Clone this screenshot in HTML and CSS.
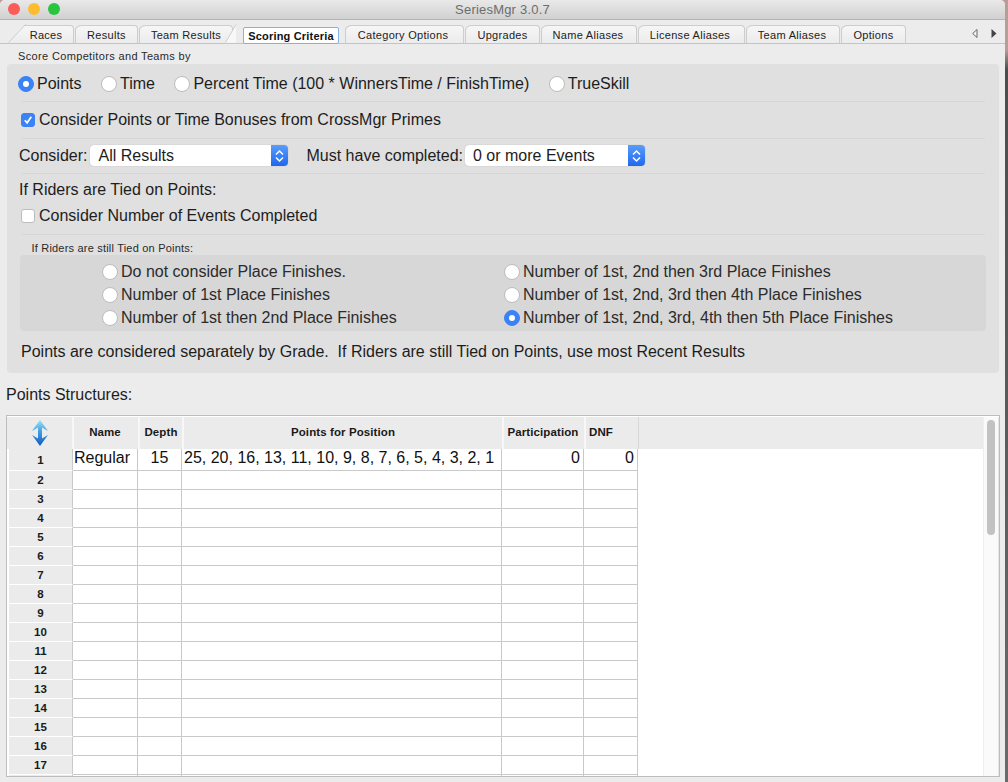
FILE: index.html
```html
<!DOCTYPE html>
<html lang="en">
<head>
    <meta charset="UTF-8">
    <meta name="viewport" content="width=device-width, initial-scale=1.0">
    <title>SeriesMgr 3.0.7</title>
    <link rel="stylesheet" href="styles.css">
</head>
<body>
    <div class="window">
        <header class="titlebar">
            <div class="lights">
                <span class="light red"></span>
                <span class="light yellow"></span>
                <span class="light green"></span>
            </div>
            <span class="title">SeriesMgr 3.0.7</span>
        </header>

        <nav class="tabs">
            <a class="tab first">Races</a>
            <a class="tab t-results">Results</a>
            <a class="tab t-team">Team Results</a>
            <a class="tab selected">Scoring Criteria</a>
            <a class="tab t-cat">Category Options</a>
            <a class="tab t-up">Upgrades</a>
            <a class="tab t-name">Name Aliases</a>
            <a class="tab t-lic">License Aliases</a>
            <a class="tab t-tal">Team Aliases</a>
            <a class="tab t-opt">Options</a>
            <!-- slanted edges of the first and the selected tab -->
            <svg class="slant slant-first" width="19" height="19" viewBox="0 0 19 19"><path d="M0 0H17.500L.5 18.500z" fill="#ececec"/><path d="M.5 18.500 17.500 .5" fill="none" stroke="#cdcdcd"/></svg>
            <svg class="slant slant-selected" width="12" height="19" viewBox="0 0 12 19"><path d="M.5 18.500 11 .5V19z" fill="#f8f8f8"/><path d="M.5 18.500 11 .5" fill="none" stroke="#cdcdcd"/></svg>
            <div class="tab-arrows">
                <svg width="6" height="9" viewBox="0 0 6 9"><path d="M5 .5v8L.7 4.500z" fill="#f4f4f4" stroke="#666" stroke-width="1"/></svg>
                <svg width="6" height="9" viewBox="0 0 6 9"><path d="M.5 0v9L5.500 4.500z" fill="#444"/></svg>
            </div>
        </nav>

        <main class="content">
            <div class="group-label">Score Competitors and Teams by</div>
            <section class="group">
                <div class="row row-score">
                    <label class="opt"><span class="radio on"></span>Points</label>
                    <label class="opt"><span class="radio"></span>Time</label>
                    <label class="opt"><span class="radio"></span>Percent Time (100 * WinnersTime / FinishTime)</label>
                    <label class="opt"><span class="radio"></span>TrueSkill</label>
                </div>
                <hr class="sep">
                <label class="opt row-check">
                    <span class="check on">
                        <svg width="10" height="10" viewBox="0 0 10 10"><path d="M1.800 5.200 4.100 7.800 8.300 1.800" fill="none" stroke="#fff" stroke-width="1.700"/></svg>
                    </span>Consider Points or Time Bonuses from CrossMgr Primes
                </label>
                <hr class="sep">
                <div class="row row-select">
                    <span>Consider:</span>
                    <div class="select sel-consider">All Results<span class="sel-btn">
                        <svg width="9" height="14" viewBox="0 0 9 14"><path d="M1 5.500 4.500 2 8 5.500M1 8.500 4.500 12 8 8.500" fill="none" stroke="#fff" stroke-width="1.500"/></svg>
                    </span></div>
                    <span class="must">Must have completed:</span>
                    <div class="select sel-events">0 or more Events<span class="sel-btn">
                        <svg width="9" height="14" viewBox="0 0 9 14"><path d="M1 5.500 4.500 2 8 5.500M1 8.500 4.500 12 8 8.500" fill="none" stroke="#fff" stroke-width="1.500"/></svg>
                    </span></div>
                </div>
                <hr class="sep">
                <div class="tied-title">If Riders are Tied on Points:</div>
                <label class="opt row-check2"><span class="check"></span>Consider Number of Events Completed</label>
                <hr class="sep">
                <div class="sub-label">If Riders are still Tied on Points:</div>
                <div class="subgroup">
                    <label class="opt"><span class="radio"></span>Do not consider Place Finishes.</label>
                    <label class="opt"><span class="radio"></span>Number of 1st, 2nd then 3rd Place Finishes</label>
                    <label class="opt"><span class="radio"></span>Number of 1st Place Finishes</label>
                    <label class="opt"><span class="radio"></span>Number of 1st, 2nd, 3rd then 4th Place Finishes</label>
                    <label class="opt"><span class="radio"></span>Number of 1st then 2nd Place Finishes</label>
                    <label class="opt"><span class="radio on"></span>Number of 1st, 2nd, 3rd, 4th then 5th Place Finishes</label>
                </div>
                <p class="note">Points are considered separately by Grade.&nbsp; If Riders are still Tied on Points, use most Recent Results</p>
            </section>

            <div class="structures-label">Points Structures:</div>
            <div class="grid-frame">
                <div class="grid-scroll">
                    <table class="grid">
                        <colgroup>
                            <col class="c-row"><col class="c-name"><col class="c-depth"><col class="c-points"><col class="c-part"><col class="c-dnf"><col>
                        </colgroup>
                        <thead>
                            <tr>
                                <th class="corner">
                                    <svg width="16" height="26" viewBox="0 0 16 26">
                                        <defs>
                                            <linearGradient id="arrowFill" x1="0" y1="0" x2="0" y2="1">
                                                <stop offset="0" stop-color="#9be0f5"/>
                                                <stop offset="0.45" stop-color="#3f9fe2"/>
                                                <stop offset="1" stop-color="#1458c4"/>
                                            </linearGradient>
                                        </defs>
                                        <path d="M8 0 16 11 10 7.500V18.500L16 15 8 26 0 15 6 18.500V7.500L0 11z" fill="url(#arrowFill)"/>
                                    </svg>
                                </th>
                                <th class="th-name">Name</th><th>Depth</th><th>Points for Position</th><th class="th-part">Participation</th><th class="th-dnf">DNF</th><th class="th-rest"></th>
                            </tr>
                        </thead>
                        <tbody>
                            <tr class="first-row"><th>1</th><td>Regular</td><td class="mid">15</td><td class="pts">25, 20, 16, 13, 11, 10, 9, 8, 7, 6, 5, 4, 3, 2, 1</td><td class="num">0</td><td class="num">0</td><td class="rest"></td></tr>
                            <tr><th>2</th><td></td><td></td><td></td><td></td><td></td><td class="rest"></td></tr>
                            <tr><th>3</th><td></td><td></td><td></td><td></td><td></td><td class="rest"></td></tr>
                            <tr><th>4</th><td></td><td></td><td></td><td></td><td></td><td class="rest"></td></tr>
                            <tr><th>5</th><td></td><td></td><td></td><td></td><td></td><td class="rest"></td></tr>
                            <tr><th>6</th><td></td><td></td><td></td><td></td><td></td><td class="rest"></td></tr>
                            <tr><th>7</th><td></td><td></td><td></td><td></td><td></td><td class="rest"></td></tr>
                            <tr><th>8</th><td></td><td></td><td></td><td></td><td></td><td class="rest"></td></tr>
                            <tr><th>9</th><td></td><td></td><td></td><td></td><td></td><td class="rest"></td></tr>
                            <tr><th>10</th><td></td><td></td><td></td><td></td><td></td><td class="rest"></td></tr>
                            <tr><th>11</th><td></td><td></td><td></td><td></td><td></td><td class="rest"></td></tr>
                            <tr><th>12</th><td></td><td></td><td></td><td></td><td></td><td class="rest"></td></tr>
                            <tr><th>13</th><td></td><td></td><td></td><td></td><td></td><td class="rest"></td></tr>
                            <tr><th>14</th><td></td><td></td><td></td><td></td><td></td><td class="rest"></td></tr>
                            <tr><th>15</th><td></td><td></td><td></td><td></td><td></td><td class="rest"></td></tr>
                            <tr><th>16</th><td></td><td></td><td></td><td></td><td></td><td class="rest"></td></tr>
                            <tr><th>17</th><td></td><td></td><td></td><td></td><td></td><td class="rest"></td></tr>
                            <tr><th></th><td></td><td></td><td></td><td></td><td></td><td class="rest"></td></tr>
                        </tbody>
                    </table>
                </div>
                <div class="scrollbar"><div class="thumb"></div></div>
            </div>
        </main>
    </div>
</body>
</html>
```

FILE: styles.css
```css
/* General */
html, body {
    margin: 0;
    padding: 0;
    height: 782px;
    overflow: hidden;
}

body {
    font-family: "Liberation Sans", Arial, sans-serif;
    font-size: 16px;
    color: #1d1d1d;
    background: linear-gradient(#b89c98 0, #b89c98 50px, #4c4c4c 70px, #6a6a6a 100%);
}

.window {
    width: 1005px;
    height: 782px;
    background-color: #ececec;
    display: flex;
    flex-direction: column;
    border-radius: 5px 5px 0 0;
    overflow: hidden;
}

/* Title bar */
.titlebar {
    height: 19px;
    flex: none;
    display: flex;
    align-items: center;
    justify-content: center;
    background: linear-gradient(#e9e9e9, #d0d0d0);
    border-bottom: 1px solid #b4b4b4;
    position: relative;
}

.title {
    font-size: 13px;
    color: #6d6d6d;
    letter-spacing: 0.2px;
}

.lights {
    position: absolute;
    left: 8px;
    top: 3px;
    display: flex;
    gap: 8px;
}

.light {
    width: 12px;
    height: 12px;
    border-radius: 50%;
}

.red { background-color: #fc5b57; }
.yellow { background-color: #fdbc2e; }
.green { background-color: #27c63f; }

/* Tabs */
.tabs {
    height: 23px;
    flex: none;
    display: flex;
    align-items: flex-end;
    padding-left: 8px;
    border-bottom: 1px solid #c4c4c4;
    position: relative;
    background-color: #ececec;
}

.tab {
    box-sizing: border-box;
    height: 18px;
    font-size: 11px;
    letter-spacing: 0.3px;
    line-height: 19px;
    text-align: center;
    color: #222;
    background: linear-gradient(#f6f6f6, #ececec);
    border: 1px solid #cdcdcd;
    border-bottom: none;
    border-radius: 7px 4px 0 0 / 5px 4px 0 0;
    margin-right: 1px;
}

.first { width: 66px; padding-left: 11px; border-left: none; }
.t-results { width: 63px; }
.t-team { width: 94px; margin-right: 10px; }
.t-cat { width: 119px; margin-left: 6px; padding-right: 3px; }
.t-up { width: 75px; }
.t-name { width: 96px; padding-right: 2px; }
.t-lic { width: 107px; padding-right: 3px; }
.t-tal { width: 94px; padding-right: 2px; }
.t-opt { width: 65px; }

.selected {
    width: 96px;
    height: 17px;
    line-height: 16px;
    font-weight: bold;
    letter-spacing: 0.2px;
    color: #111;
    background-color: #fff;
    background-image: none;
    border: 1px solid #7fb2e6;
    border-radius: 2px;
    margin-bottom: -1px;
    margin-right: 0;
    position: relative;
    z-index: 1;
}

.slant {
    position: absolute;
    top: 4px;
}

.slant-first { left: 8px; }
.slant-selected { left: 225px; }

.tab-arrows {
    position: absolute;
    left: 972px;
    top: 9px;
    display: flex;
    gap: 13px;
}

/* Content */
.content {
    flex: 1;
    padding: 0 0 0 6px;
    min-height: 0;
    display: flex;
    flex-direction: column;
}

.group-label {
    font-size: 11px;
    letter-spacing: 0.35px;
    padding: 5px 0 1px 12px;
    height: 14px;
    line-height: 14px;
    color: #2a2a2a;
}

.group {
    box-sizing: border-box;
    width: 992px;
    height: 309px;
    margin-left: 1px;
    background-color: #e0e0e0;
    border-radius: 4px;
    flex: none;
}

.opt {
    display: flex;
    align-items: center;
    white-space: nowrap;
}

.radio {
    box-sizing: border-box;
    width: 16px;
    height: 16px;
    border-radius: 50%;
    background-color: #fff;
    border: 1px solid #bcbcbc;
    margin-right: 3px;
    flex: none;
}

.radio.on {
    background-color: #3b82f6;
    border-color: #3b82f6;
    position: relative;
}

.radio.on::after {
    content: "";
    position: absolute;
    left: 4px;
    top: 4px;
    width: 6px;
    height: 6px;
    border-radius: 50%;
    background-color: #fff;
}

.check {
    box-sizing: border-box;
    width: 14px;
    height: 14px;
    border-radius: 3px;
    background-color: #fff;
    border: 1px solid #bcbcbc;
    margin-right: 4px;
    flex: none;
    display: flex;
    align-items: center;
    justify-content: center;
}

.check.on {
    background-color: #3b82f6;
    border-color: #3b82f6;
}

.sep {
    border: none;
    height: 1px;
    background-color: #d6d6d6;
    margin: 0 14px 0 15px;
}

.row {
    display: flex;
    align-items: center;
}

.row-score {
    box-sizing: border-box;
    height: 37px;
    padding: 2px 0 0 11px;
    gap: 19.500px;
}

.row-check {
    height: 36px;
    padding-left: 14px;
}

.row-select {
    box-sizing: border-box;
    height: 34px;
    padding: 0 0 1px 12px;
}

.select {
    box-sizing: border-box;
    height: 21px;
    line-height: 21px;
    background-color: #fff;
    border-radius: 4px;
    box-shadow: 0 0 1px 0 #999;
    padding-left: 8px;
    position: relative;
    margin-left: 3px;
}

.sel-consider { width: 198px; }
.sel-events { width: 180px; margin-left: 2px; }

.sel-btn {
    position: absolute;
    right: 0;
    top: 0;
    width: 17px;
    height: 21px;
    border-radius: 0 4px 4px 0;
    background: linear-gradient(#5a9cfb, #1f68ee);
    display: flex;
    align-items: center;
    justify-content: center;
}

.must { margin-left: 18px; }

.tied-title {
    height: 31px;
    line-height: 32px;
    padding-left: 12px;
}

.row-check2 {
    box-sizing: border-box;
    height: 29px;
    padding: 0 0 7px 14px;
}

.sub-label {
    font-size: 11px;
    letter-spacing: 0.2px;
    height: 20px;
    line-height: 26px;
    padding-left: 24.500px;
    color: #2a2a2a;
}

.subgroup {
    box-sizing: border-box;
    height: 76px;
    margin: 0 13px;
    background-color: #d7d7d7;
    border-radius: 4px;
    padding: 5px 0 0 82px;
    display: grid;
    grid-template-columns: 402px 1fr;
    grid-auto-rows: 23px;
    color: #2b2b2b;
}

.note {
    margin: 0;
    padding-left: 14px;
    height: 42px;
    line-height: 42px;
}

.structures-label {
    height: 42px;
    line-height: 44px;
    flex: none;
}

/* Points grid */
.grid-frame {
    box-sizing: border-box;
    width: 994px;
    height: 362px;
    flex: none;
    display: flex;
    background-color: #fff;
    border: 1px solid #bdbdbd;
    padding-top: 1px;
}

.grid-scroll {
    flex: 1;
    overflow: hidden;
    min-width: 0;
}

.grid {
    border-collapse: separate;
    border-spacing: 0;
    table-layout: fixed;
    width: 976px;
}

.c-row { width: 66px; }
.c-name { width: 65px; }
.c-depth { width: 44px; }
.c-points { width: 320px; }
.c-part { width: 82px; }
.c-dnf { width: 54px; }

.grid thead th {
    height: 32px;
    padding: 0 0 2px;
    box-sizing: border-box;
    background-color: #ebebeb;
    font-size: 11.500px;
    letter-spacing: 0.1px;
    font-weight: bold;
    color: #1a1a1a;
    text-align: center;
    border-left: 2px solid #f7f7f7;
    vertical-align: middle;
}

.grid thead .corner {
    border-left: none;
    border-right: 1px solid #f7f7f7;
    padding: 0;
}

.grid thead .th-name { border-left-width: 1px; padding-right: 2px; }
.grid thead .th-part { padding-right: 2px; }

.corner svg { display: block; margin: 0 0 0 25px; }

.grid thead .th-dnf { text-align: left; padding-left: 3px; }
.grid thead .th-rest { border-left: 1px solid #d8d8d8; }

.grid tbody th {
    box-sizing: border-box;
    height: 19px;
    padding: 0;
    font-size: 11.500px;
    font-weight: bold;
    color: #1a1a1a;
    background-color: #ebebeb;
    border-left: 2px solid #fff;
    border-right: 1px solid #c9c9c9;
    border-bottom: 1px solid #fff;
    text-align: center;
}

.grid tbody td {
    box-sizing: border-box;
    height: 19px;
    padding: 0 1px;
    font-size: 16px;
    line-height: 18px;
    color: #111;
    border-right: 1px solid #c9c9c9;
    border-bottom: 1px solid #c9c9c9;
    white-space: nowrap;
    overflow: hidden;
    vertical-align: top;
}

.grid tbody .first-row td,
.grid tbody .first-row th { height: 22px; }

.grid tbody .mid { text-align: center; }
.grid tbody .pts { padding-left: 2px; }
.grid tbody .num { text-align: right; padding-right: 3px; }

.grid tbody td.rest {
    border: none;
}

.scrollbar {
    width: 16px;
    flex: none;
    background-color: #fafafa;
    border-left: 1px solid #efefef;
    border-right: 1px solid #e6e6e6;
    box-sizing: border-box;
    padding: 3px 0 0 3px;
}

.thumb {
    width: 8px;
    height: 115px;
    border-radius: 4px;
    background-color: #c2c2c2;
}
```
